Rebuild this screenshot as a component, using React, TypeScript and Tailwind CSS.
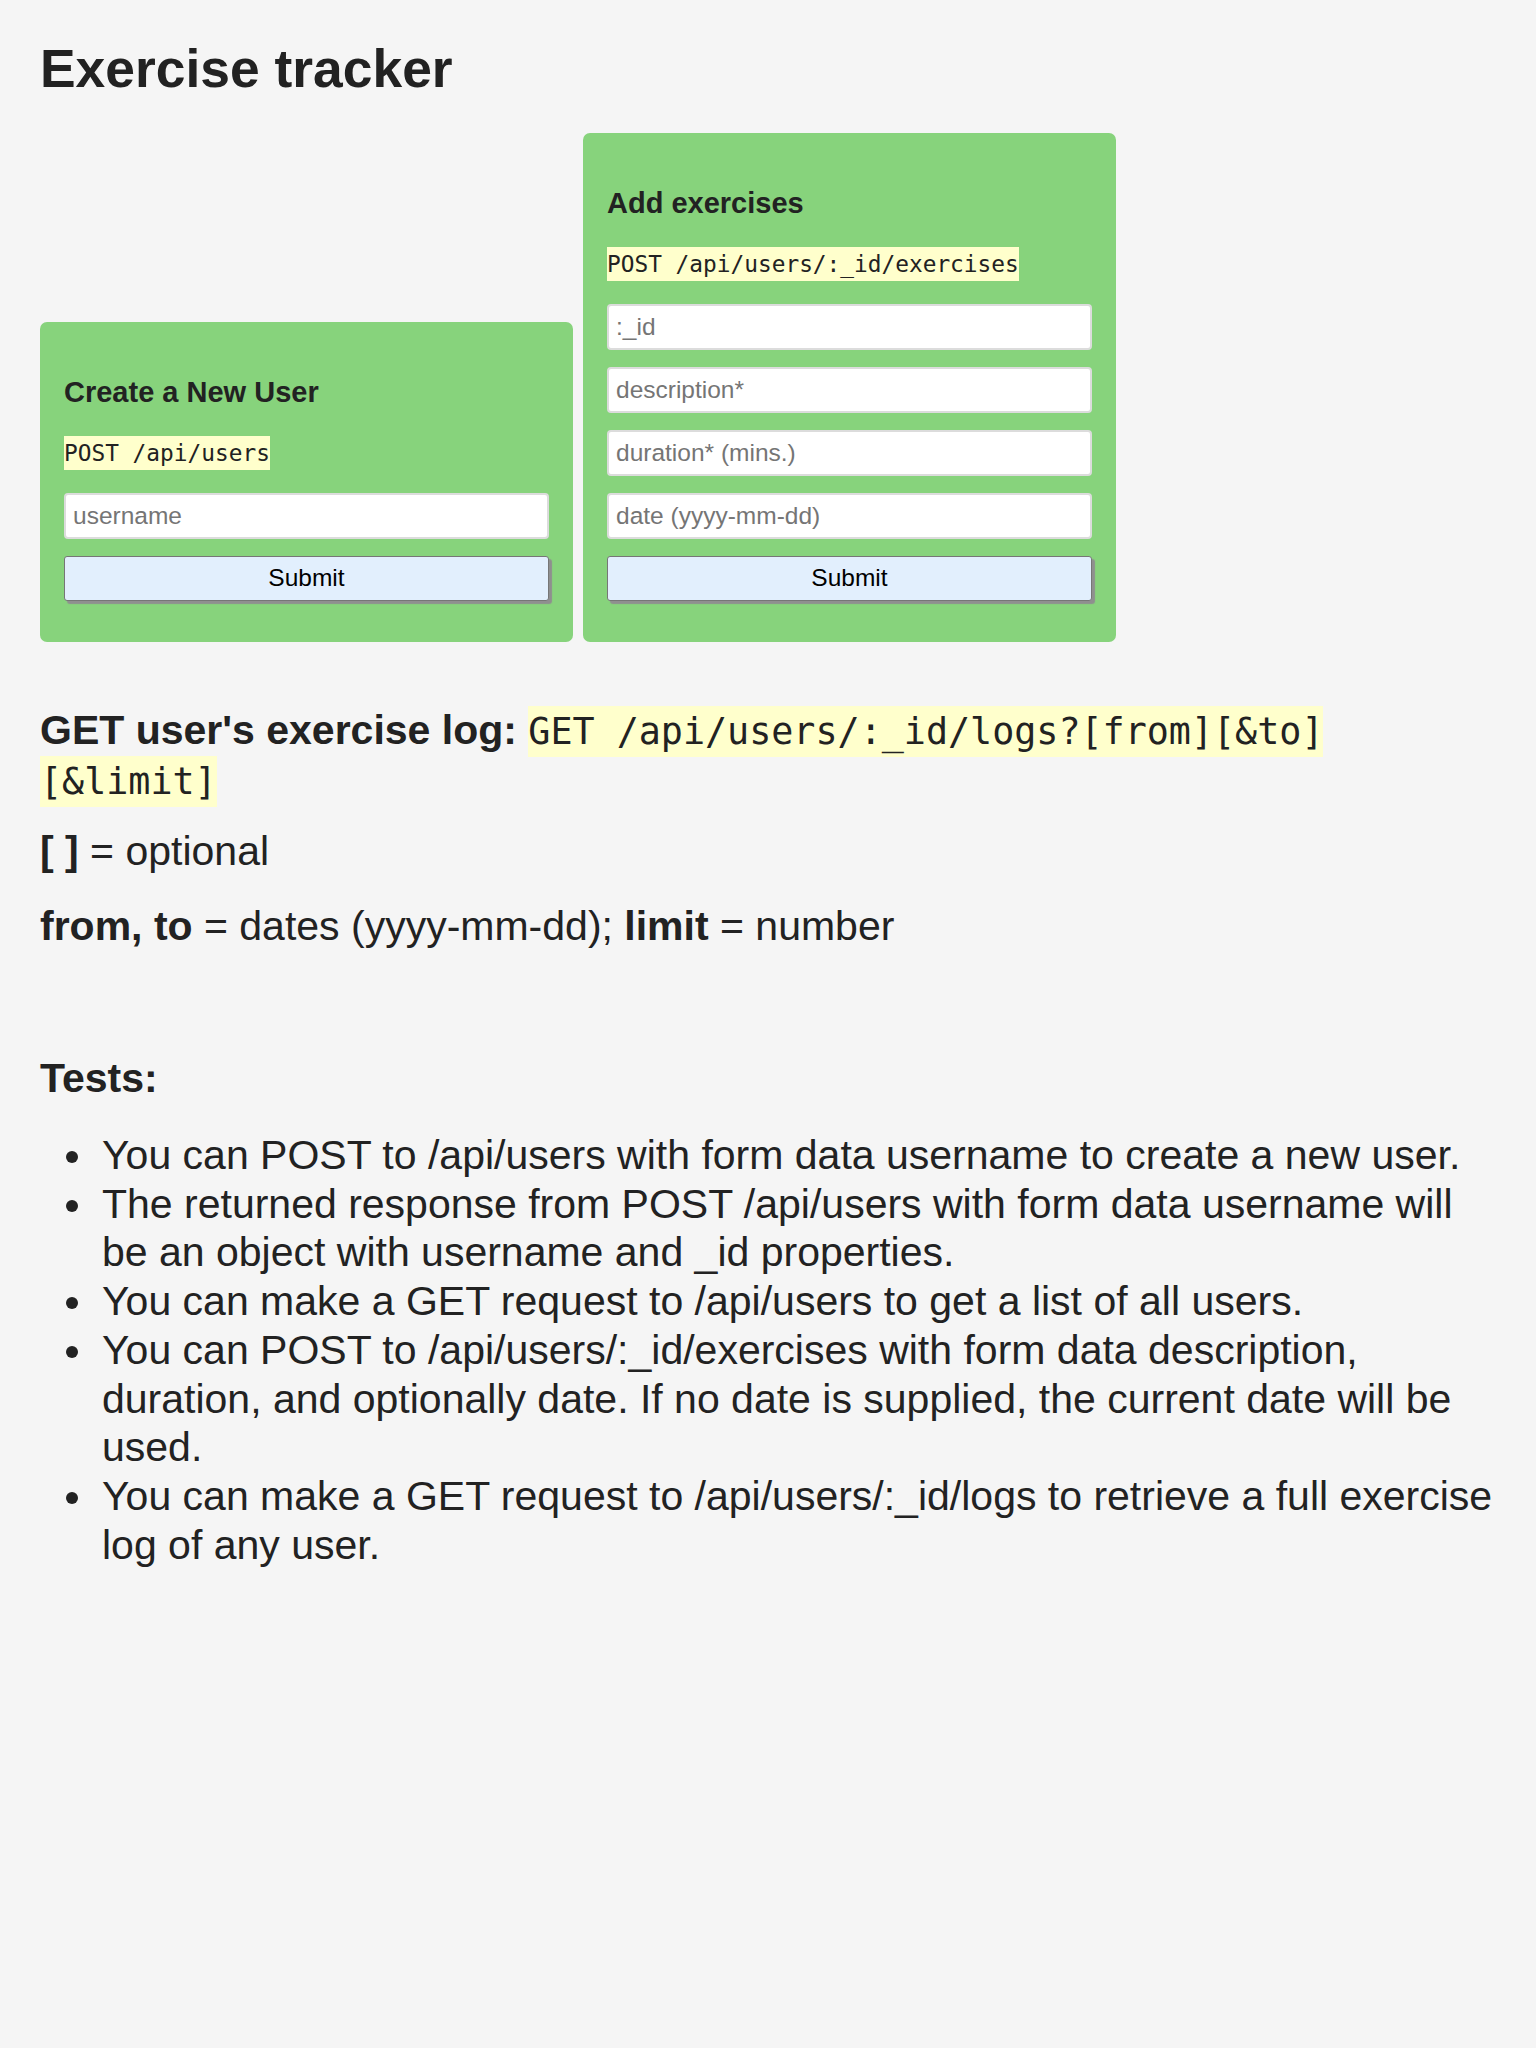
import React from "react";

const mono = "font-['DejaVu_Sans_Mono','Liberation_Mono',monospace]";

type CardProps = {
  title: string;
  endpoint: string;
  fields: string[];
};

function FormCard({ title, endpoint, fields }: CardProps) {
  return (
    <form
      className="flex w-[533px] flex-col rounded-[7px] bg-[#87d37c] px-[24px] pt-[24px] pb-[41px]"
      onSubmit={(e) => e.preventDefault()}
    >
      <h3 className="mt-[29px] text-[29px] leading-[34px] font-bold">{title}</h3>
      <div className="mt-[27px] flex">
        <code className={`${mono} inline-block h-[34px] bg-[#ffffcc] text-[22.8px] leading-[34px] text-[#222]`}>
          {endpoint}
        </code>
      </div>
      <div className="mt-[23px] flex flex-col gap-[17px]">
        {fields.map((f) => (
          <input
            key={f}
            type="text"
            placeholder={f}
            className="h-[46px] w-full rounded-[4px] border-2 border-[#dcdcdc] bg-white px-[7px] text-[24.5px] text-[#222] outline-none placeholder:text-[#757575]"
          />
        ))}
        <button
          type="submit"
          className="h-[45px] w-full rounded-[3px] border border-[#767676] bg-[#e2effd] text-[24.5px] text-black shadow-[3px_3px_1px_#8f8f8f]"
        >
          Submit
        </button>
      </div>
    </form>
  );
}

const tests = [
  "You can POST to /api/users with form data username to create a new user.",
  "The returned response from POST /api/users with form data username will be an object with username and _id properties.",
  "You can make a GET request to /api/users to get a list of all users.",
  "You can POST to /api/users/:_id/exercises with form data description, duration, and optionally date. If no date is supplied, the current date will be used.",
  "You can make a GET request to /api/users/:_id/logs to retrieve a full exercise log of any user.",
];

export default function App() {
  return (
    <div className="min-h-[2048px] bg-[#f5f5f5] px-[40px] font-['Liberation_Sans',Arial,sans-serif] text-[#222]">
      <h1 className="pt-[38px] text-[53.4px] leading-[62px] font-bold">Exercise tracker</h1>

      <div className="mt-[33px] flex items-end gap-[10px]">
        <FormCard title="Create a New User" endpoint="POST /api/users" fields={["username"]} />
        <FormCard
          title="Add exercises"
          endpoint="POST /api/users/:_id/exercises"
          fields={[":_id", "description*", "duration* (mins.)", "date (yyyy-mm-dd)"]}
        />
      </div>

      <h3 className="mt-[64px] text-[41px] leading-[48px] font-bold">
        GET user's exercise log:{" "}
        <code className={`${mono} bg-[#ffffcc] py-[4px] text-[36.7px] font-normal`}>
          GET /api/users/:_id/logs?[from][&amp;to]
          <br />
          [&amp;limit]
        </code>
      </h3>

      <p className="mt-[21px] text-[41px] leading-[48px]">
        <b>[ ]</b> = optional
      </p>
      <p className="mt-[27px] text-[41px] leading-[48px]">
        <b>from, to</b> = dates (yyyy-mm-dd); <b>limit</b> = number
      </p>

      <h3 className="mt-[104px] text-[41px] leading-[48px] font-bold">Tests:</h3>
      <ul className="mt-[29px]">
        {tests.map((t) => (
          <li key={t} className="flex text-[41px] leading-[48.7px]">
            <div className="w-[62px] shrink-0 pt-[20px] pl-[26px]">
              <div className="h-[12px] w-[12px] rounded-full bg-[#222]" />
            </div>
            <span>{t}</span>
          </li>
        ))}
      </ul>
    </div>
  );
}
